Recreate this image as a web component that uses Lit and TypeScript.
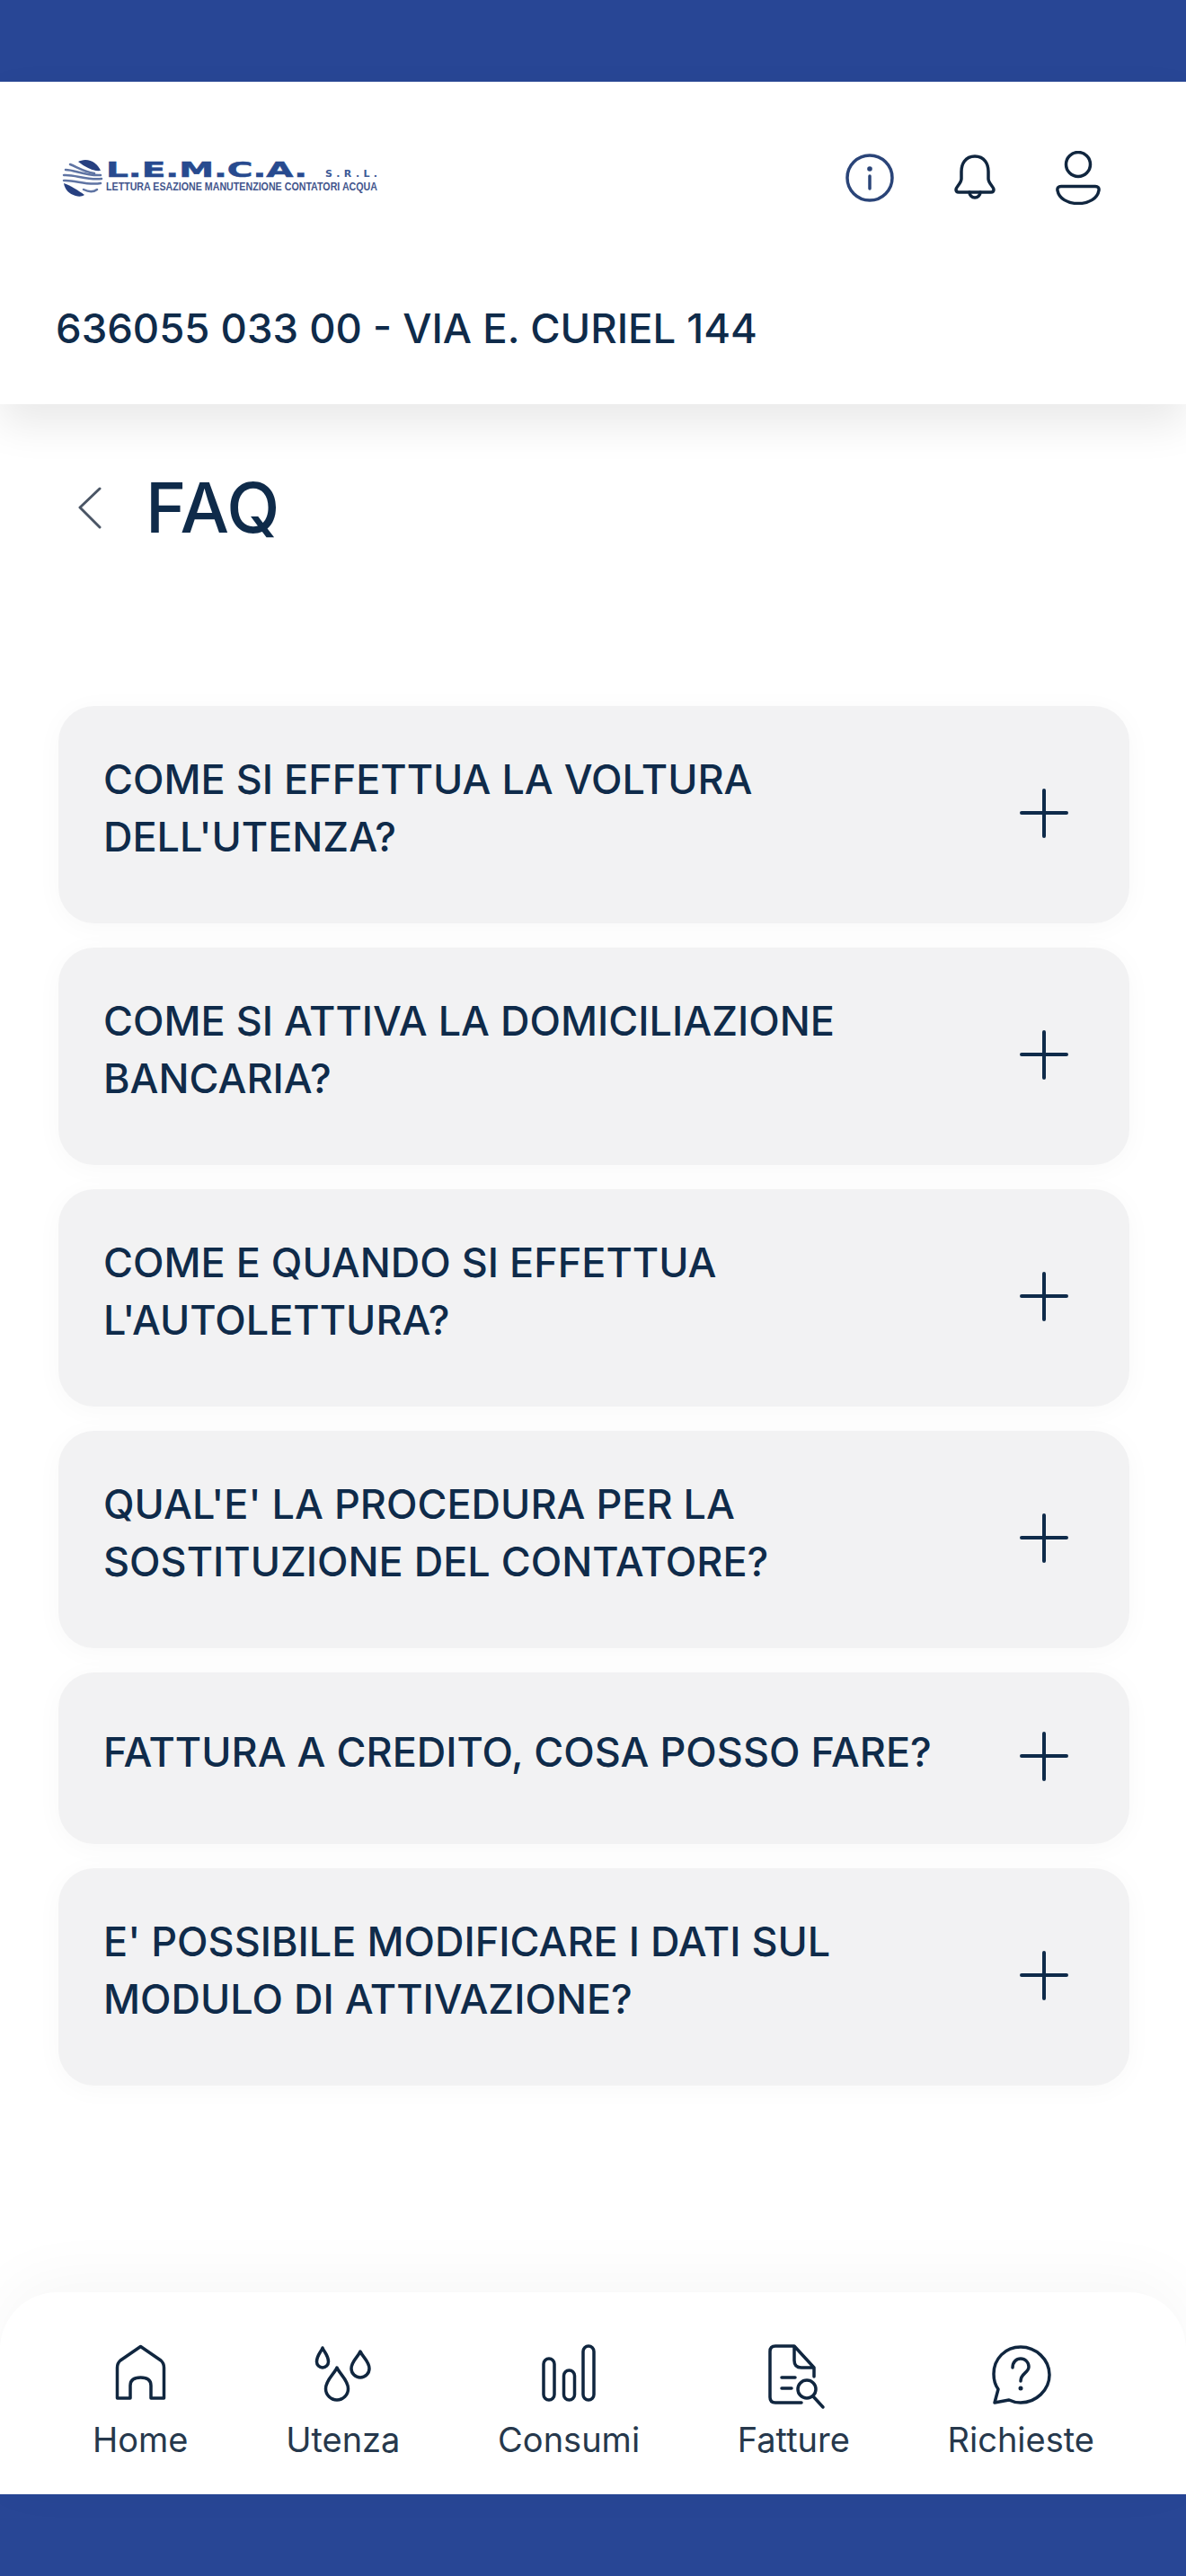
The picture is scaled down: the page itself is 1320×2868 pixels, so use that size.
import { LitElement, html, css, svg } from "lit";
import { customElement } from "lit/decorators.js";

const FAQS = [
  "COME SI EFFETTUA LA VOLTURA DELL'UTENZA?",
  "COME SI ATTIVA LA DOMICILIAZIONE BANCARIA?",
  "COME E QUANDO SI EFFETTUA L'AUTOLETTURA?",
  "QUAL'E' LA PROCEDURA PER LA SOSTITUZIONE DEL CONTATORE?",
  "FATTURA A CREDITO, COSA POSSO FARE?",
  "E' POSSIBILE MODIFICARE I DATI SUL MODULO DI ATTIVAZIONE?",
];

function drop(cx: number, t: number, w: number, h: number) {
  const r = w / 2;
  return `M${cx} ${t}C${cx + w * 0.12} ${t + h * 0.2} ${cx + r} ${t + h * 0.38} ${cx + r} ${t + h - r}A${r} ${r} 0 1 1 ${cx - r} ${t + h - r}C${cx - r} ${t + h * 0.38} ${cx - w * 0.12} ${t + h * 0.2} ${cx} ${t}Z`;
}

const NAV = [
  {
    label: "Home",
    icon: svg`<svg class="ni" width="57" height="64" viewBox="0 0 57 64"><path d="M2.5 60V26Q2.5 21 6 18L28.5 2.500L51 18Q54.500 21 54.500 26V60H40V46Q40 37 28.500 37Q17 37 17 46V60Z"/></svg>`,
  },
  {
    label: "Utenza",
    icon: svg`<svg class="ni" width="65" height="64" viewBox="0 0 65 64"><path d="${drop(10, 4, 13, 22)}"/><path d="${drop(52, 8, 20, 29)}"/><path d="${drop(26, 26, 25, 36)}"/></svg>`,
  },
  {
    label: "Consumi",
    icon: svg`<svg class="ni" width="60" height="64" viewBox="0 0 60 64"><rect x="2" y="16" width="12" height="46" rx="6"/><rect x="24.500" y="29" width="12" height="33" rx="6"/><rect x="46" y="2" width="12" height="60" rx="6"/></svg>`,
  },
  {
    label: "Fatture",
    icon: svg`<svg class="ni" width="64" height="72" viewBox="-3 0 64 72"><path d="M38 65H9Q3 65 3 59V8Q3 2 9 2H30L52 26V36M30 2V18Q30 26 38 26H52M16 37H31M16 49H27"/><circle cx="44" cy="50" r="10"/><path d="M51 58L62 70"/></svg>`,
  },
  {
    label: "Richieste",
    icon: svg`<svg class="ni" width="68" height="68" viewBox="0 0 68 68"><path d="M34 3C17 3 4 16 4 33C4 40 6 46 9 50L5 65L21 62C25 64 30 65 34 65C51 65 66 51 66 34C66 17 51 3 34 3Z"/><path d="M25 26C25 20 29 16 34 16C39 16 43 20 43 25C43 32 34 32 34 41"/><circle class="dot" cx="34" cy="49" r="2.500"/></svg>`,
  },
];

@customElement("app-root")
export class AppRoot extends LitElement {
  static styles = css`
    :host {
      display: flex;
      flex-direction: column;
      width: 1320px;
      height: 2868px;
      overflow: hidden;
      background: #fff;
      color: #0f2b4a;
      font-family: Inter, "Liberation Sans", sans-serif;
    }
    .band { height: 91px; background: #284695; flex: none; }
    .header {
      flex: none;
      position: relative;
      z-index: 1;
      background: #fff;
      padding: 67px 0 56px 62px;
      box-shadow: 0 22px 44px rgba(0, 0, 0, 0.09);
    }
    .head-row {
      height: 80px;
      display: flex;
      align-items: center;
      justify-content: space-between;
      padding: 0 95px 0 7px;
    }
    .logo { display: block; }
    .logo text { font-weight: 700; fill: #274a8f; }
    .logo .big { font-family: "DejaVu Sans", sans-serif; stroke: #274a8f; stroke-width: 0.5; }
    .logo .small { font-family: "DejaVu Sans", sans-serif; fill: #3d5a96; }
    .logo .sub { font-family: "Liberation Sans", sans-serif; fill: #42558c; }
    .logo .blob { fill: #274080; }
    .logo .stripe { fill: none; stroke: #5f74a3; stroke-width: 2.5; stroke-linecap: round; }
    .actions { display: flex; align-items: center; gap: 67px; }
    .ai { display: block; fill: none; stroke: #10263f; stroke-width: 3.5; stroke-linecap: round; stroke-linejoin: round; }
    .ai.info { stroke: #2a4478; }
    .ai .dot { fill: #2a4478; stroke: none; }
    .address {
      margin-top: 100px;
      font-size: 45.500px;
      line-height: 56px;
      font-weight: 500;
      color: #0f2b4a;
    }
    main { flex: 1; min-height: 0; padding: 70px 63px 0 65px; }
    .title-row { display: flex; align-items: center; height: 90px; }
    .back { display: block; margin-left: 21px; fill: none; stroke: #4a5565; stroke-width: 3; stroke-linecap: round; stroke-linejoin: round; }
    h1 {
      margin: 0 0 0 49px;
      font-size: 77px;
      line-height: 90px;
      font-weight: 500;
      color: #0f2b4a;
    }
    .list { display: flex; flex-direction: column; gap: 27px; margin-top: 176px; }
    .card {
      display: flex;
      align-items: center;
      gap: 80px;
      padding: 50px 68px 64px 50px;
      border-radius: 40px;
      background: #f2f2f3;
      box-shadow: 0 4px 30px rgba(0, 0, 0, 0.03);
    }
    .q {
      flex: 1;
      min-width: 0;
      font-size: 45px;
      line-height: 64px;
      font-weight: 500;
      color: #0f2b4a;
    }
    .plus { display: block; flex: none; stroke: #0f2b4a; stroke-width: 4; fill: none; stroke-linecap: round; }
    nav {
      flex: none;
      position: relative;
      height: 225px;
      box-sizing: border-box;
      padding: 58px 102px 0 103px;
      display: flex;
      justify-content: space-between;
      background: #fff;
      border-radius: 64px 64px 0 0;
      box-shadow: 0 -16px 70px rgba(0, 0, 0, 0.035);
    }
    .item { display: flex; flex-direction: column; align-items: center; }
    .ib { height: 72px; display: flex; align-items: flex-start; }
    .ni { display: block; overflow: visible; fill: none; stroke: #10263f; stroke-width: 3.500; stroke-linecap: round; stroke-linejoin: round; }
    .ni .dot { fill: #10263f; stroke: none; }
    .label { margin-top: 10px; font-size: 38px; line-height: 48px; color: #26384c; }
  `;

  render() {
    return html`
      <div class="band"></div>
      <header class="header">
        <div class="head-row">
          <svg class="logo" width="440" height="44" viewBox="0 0 440 44">
            <path class="blob" d="M26 2C34 2 40 7 43 14C34 15 26 10 18 4C20 3 23 2 26 2Z"/>
            <path class="stripe" d="M9 7C17 10 24 15 36 17"/>
            <path class="stripe" d="M4 13C14 13 26 20 43 19"/>
            <path class="stripe" d="M2 19C14 18 28 25 44 23"/>
            <path class="stripe" d="M2 25C14 24 28 31 43 28"/>
            <path class="stripe" d="M24 35C30 38 35 38 39 35"/>
            <path class="blob" d="M2 28C9 30 18 36 25 41C22 43 19 43 15 42C8 40 3 35 2 28Z"/>
            <text class="big" x="49" y="21" font-size="23" textLength="224" lengthAdjust="spacingAndGlyphs">L.E.M.C.A.</text>
            <text class="small" x="293" y="21" font-size="11" textLength="58" lengthAdjust="spacing">S.R.L.</text>
            <text class="sub" x="49" y="36" font-size="12" textLength="302" lengthAdjust="spacingAndGlyphs">LETTURA ESAZIONE MANUTENZIONE CONTATORI ACQUA</text>
          </svg>
          <div class="actions">
            <svg class="ai info" width="54" height="54" viewBox="0 0 54 54">
              <circle cx="27" cy="27" r="25"/>
              <path d="M27 25V39"/>
              <circle class="dot" cx="27" cy="17" r="2.800"/>
            </svg>
            <svg class="ai" width="46" height="52" viewBox="0 0 46 52">
              <path d="M23 2C12 2 8 11 8 19V27C8 32 2 36 2 39Q2 42 5 42H41Q44 42 44 39C44 36 38 32 38 27V19C38 11 34 2 23 2Z"/>
              <path d="M17 42A6 6 0 0 0 29 42"/>
            </svg>
            <svg class="ai" width="50" height="60" viewBox="0 0 50 60">
              <circle cx="25" cy="15" r="13.500"/>
              <path d="M6 39.500H44C47 39.500 48.500 41 48 44C46.500 53 37 58.500 25 58.500C13 58.500 3.500 53 2 44C1.500 41 3 39.500 6 39.500Z"/>
            </svg>
          </div>
        </div>
        <div class="address">636055 033 00 - VIA E. CURIEL 144</div>
      </header>
      <main>
        <div class="title-row">
          <svg class="back" width="27" height="48" viewBox="0 0 27 48"><path d="M25 3L3 24L25 46"/></svg>
          <h1>FAQ</h1>
        </div>
        <div class="list">
          ${FAQS.map(
            (q) => html`<div class="card">
              <div class="q">${q}</div>
              <svg class="plus" width="54" height="77" viewBox="0 0 54 77"><path d="M27 18V69M2 43H52"/></svg>
            </div>`
          )}
        </div>
      </main>
      <nav>
        ${NAV.map(
          (n) => html`<div class="item"><div class="ib">${n.icon}</div><div class="label">${n.label}</div></div>`
        )}
      </nav>
      <div class="band"></div>
    `;
  }
}
